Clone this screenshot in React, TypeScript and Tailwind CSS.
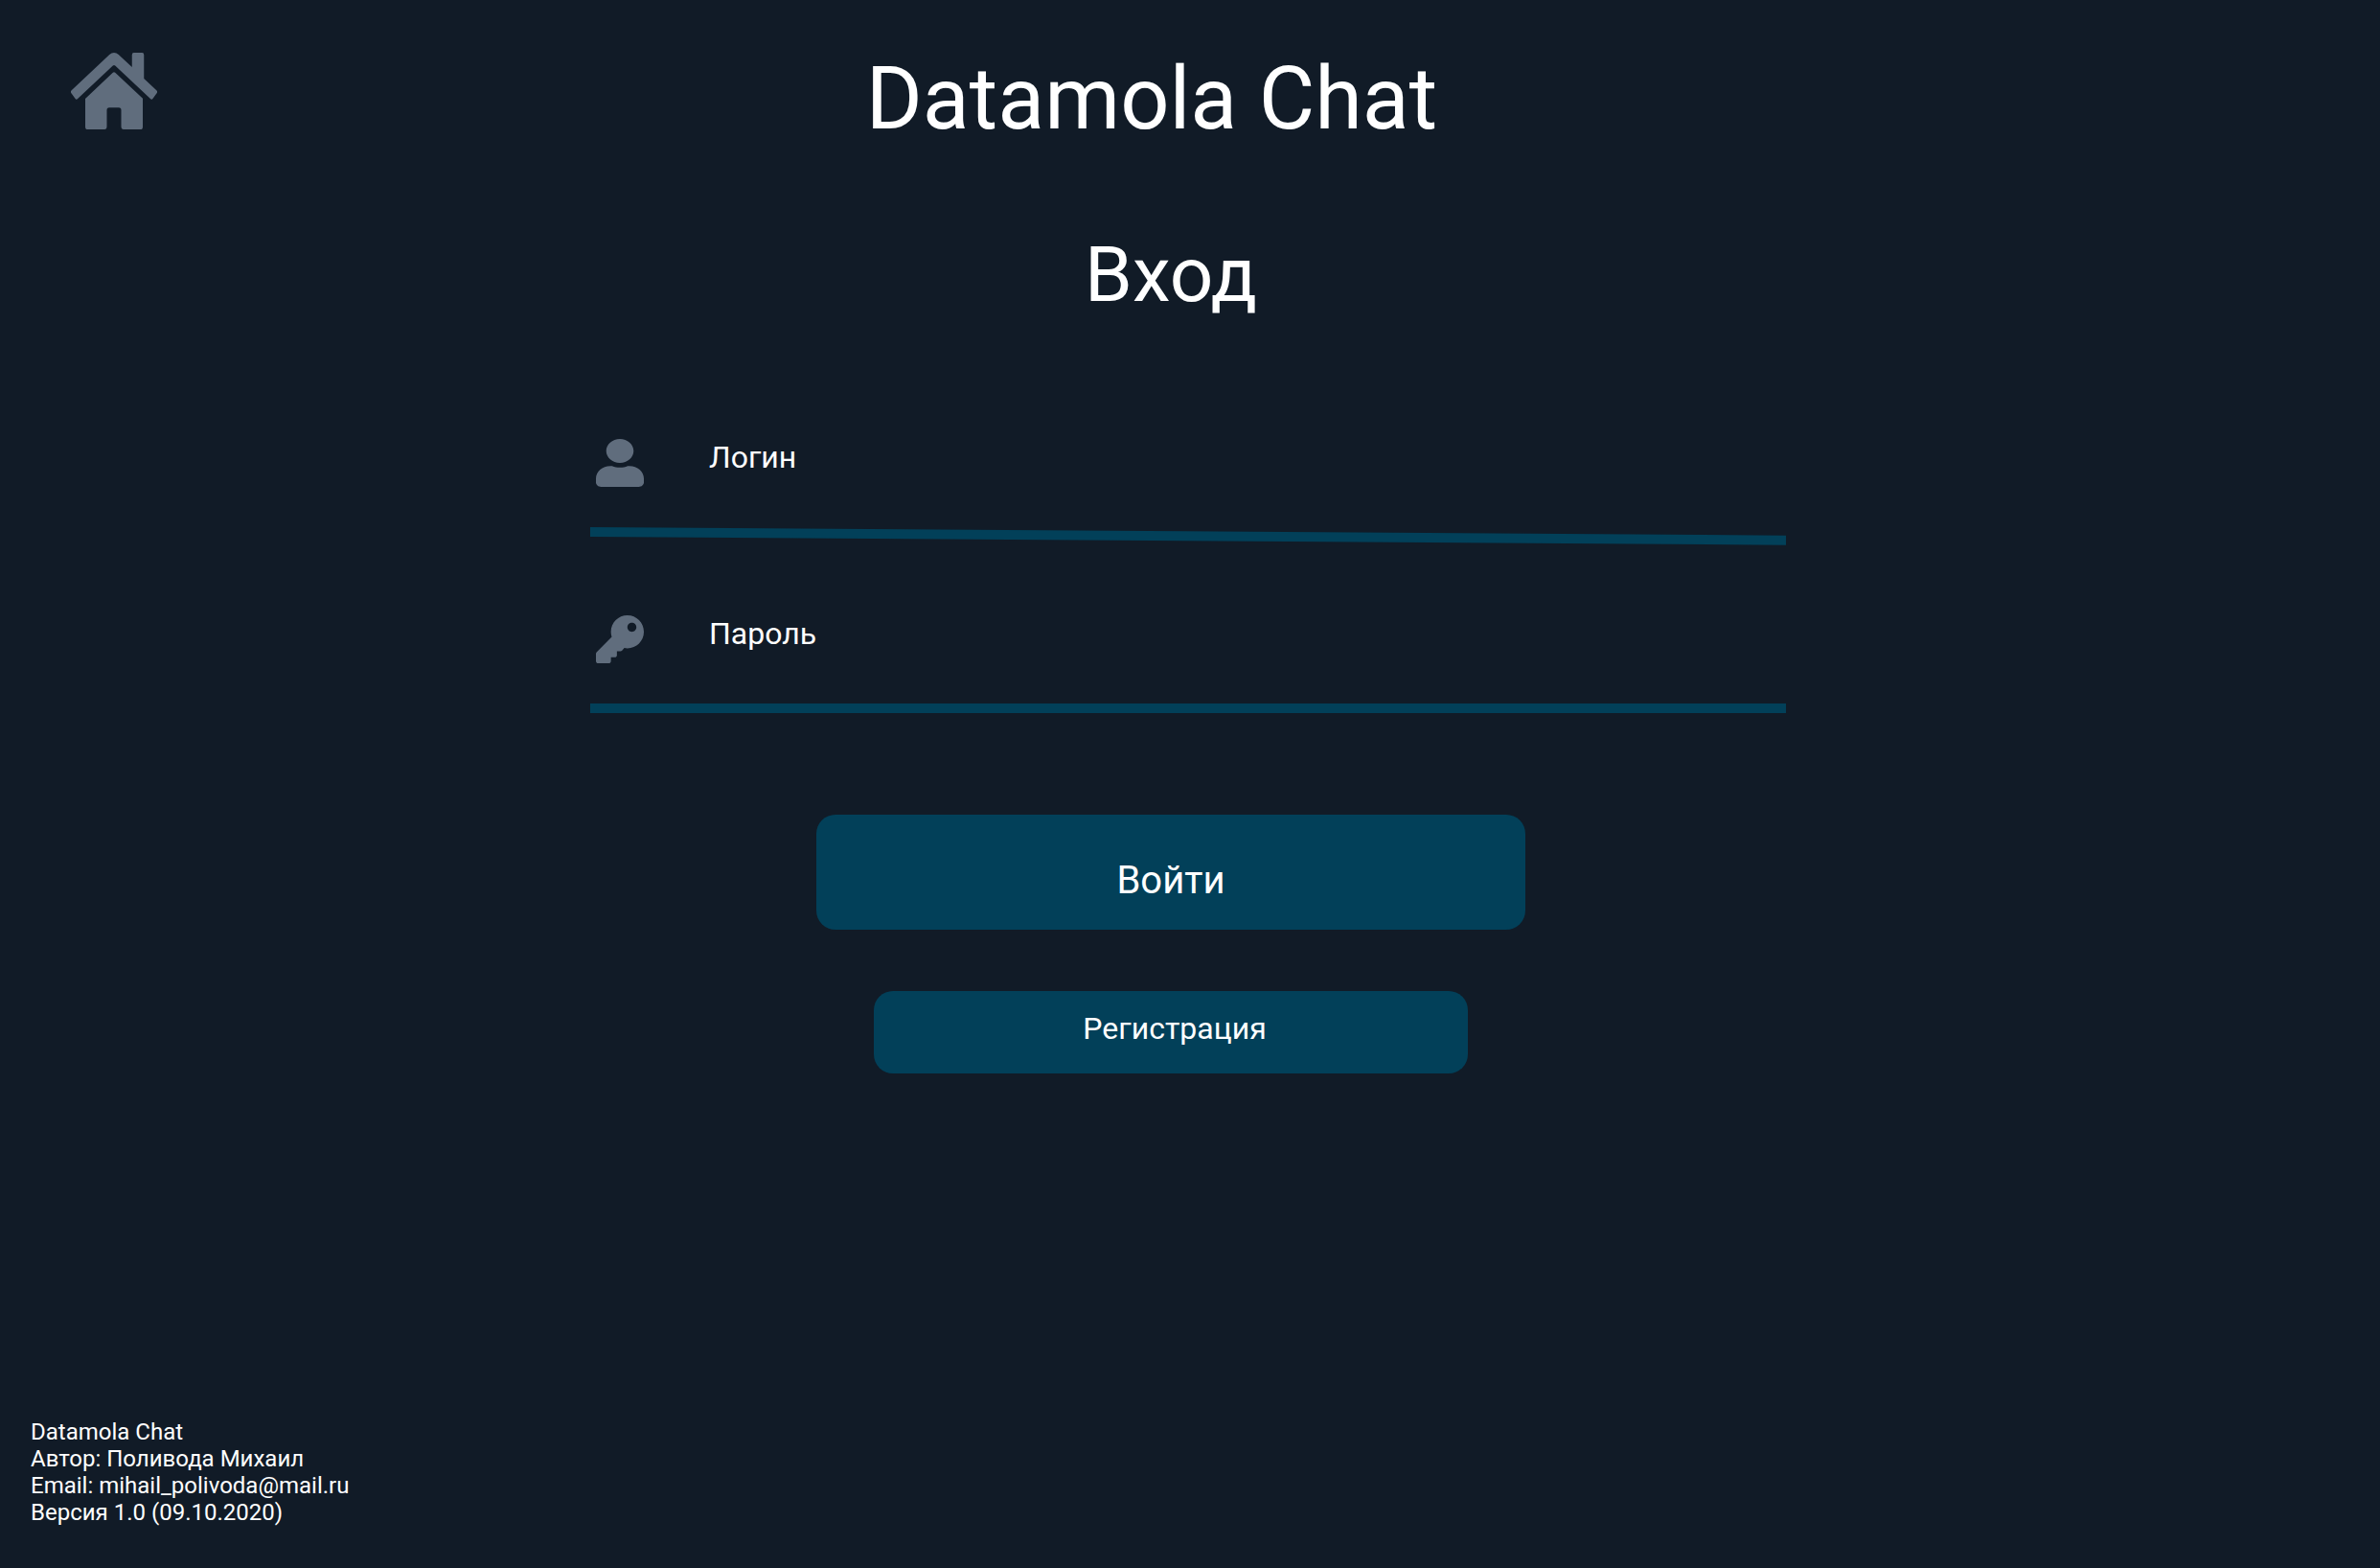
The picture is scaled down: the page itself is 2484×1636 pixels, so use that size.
import type { ReactNode } from "react";

function HomeIcon() {
  return (
    <svg viewBox="0 32 576 448" preserveAspectRatio="none" fill="currentColor" className="block h-20 w-[90px]" aria-hidden="true">
      <path d="M280.37 148.26L96 300.11V464a16 16 0 0 0 16 16l112.06-.29a16 16 0 0 0 15.92-16V368a16 16 0 0 1 16-16h64a16 16 0 0 1 16 16v95.64a16 16 0 0 0 16 16.05L464 480a16 16 0 0 0 16-16V300L295.67 148.26a12.19 12.19 0 0 0-15.3 0zM571.6 251.47L488 182.56V44.05a12 12 0 0 0-12-12h-56a12 12 0 0 0-12 12v72.61L318.47 43a48 48 0 0 0-61 0L4.34 251.47a12 12 0 0 0-1.6 16.9l25.5 31A12 12 0 0 0 45.15 301l235.22-193.74a12.19 12.19 0 0 1 15.3 0L530.9 301a12 12 0 0 0 16.9-1.6l25.5-31a12 12 0 0 0-1.7-16.93z" />
    </svg>
  );
}

function UserIcon() {
  return (
    <svg viewBox="0 0 448 512" preserveAspectRatio="none" fill="currentColor" className="block size-[50px] shrink-0 text-[#606d7d]" aria-hidden="true">
      <path d="M224 256c70.7 0 128-57.3 128-128S294.7 0 224 0 96 57.3 96 128s57.3 128 128 128zm89.6 32h-16.7c-22.2 10.2-46.9 16-72.9 16s-50.6-5.8-72.9-16h-16.7C60.2 288 0 348.2 0 422.4V464c0 26.5 21.5 48 48 48h352c26.5 0 48-21.5 48-48v-41.6c0-74.2-60.2-134.4-134.4-134.4z" />
    </svg>
  );
}

function KeyIcon() {
  return (
    <svg viewBox="0 0 512 512" fill="currentColor" className="block size-[50px] shrink-0 text-[#606d7d]" aria-hidden="true">
      <path d="M512 176.001C512 273.203 433.202 352 336 352c-11.22 0-22.19-1.062-32.827-3.069l-24.012 27.014A23.999 23.999 0 0 1 261.223 384H224v40c0 13.255-10.745 24-24 24h-40v40c0 13.255-10.745 24-24 24H24c-13.255 0-24-10.745-24-24v-78.059c0-6.365 2.529-12.47 7.029-16.971l161.802-161.802C163.108 213.814 160 195.271 160 176 160 78.798 238.797.001 335.999 0 433.488-.001 512 78.511 512 176.001zM336 128c0 26.51 21.49 48 48 48s48-21.49 48-48-21.49-48-48-48-48 21.49-48 48z" />
    </svg>
  );
}

type FieldProps = {
  id: string;
  type: string;
  label: string;
  icon: ReactNode;
  slope: number;
};

function Field({ id, type, label, icon, slope }: FieldProps) {
  return (
    <div className="flex flex-col">
      <div className="flex items-start gap-17 pl-[6px]">
        {icon}
        <div className="flex min-w-0 flex-1 gap-4 text-[32px] leading-[38px]">
          <label htmlFor={id}>{label}</label>
          <input id={id} name={id} type={type} className="h-[38px] min-w-0 flex-1 bg-transparent outline-none" />
        </div>
      </div>
      <svg viewBox="0 0 1248 20" preserveAspectRatio="none" className="mt-[42px] block h-5 w-full text-[#024059]" aria-hidden="true">
        <polygon fill="currentColor" points={`0,0 1248,${slope} 1248,${slope + 10} 0,10`} />
      </svg>
    </div>
  );
}

export default function App() {
  return (
    <div className="flex min-h-screen flex-col bg-[#111b27] font-[Roboto,sans-serif] text-white">
      <header className="grid grid-cols-[1fr_auto_1fr] items-start pt-[51px] pr-[154px] pl-[74px]">
        <a href="#home" aria-label="Datamola Chat" className="mt-1 justify-self-start text-[#606d7d]">
          <HomeIcon />
        </a>
        <h1 className="text-[90px] leading-[106px]">Datamola Chat</h1>
      </header>

      <main className="flex flex-col items-center pt-[83px] pr-10">
        <h2 className="text-[80px] leading-[94px]">Вход</h2>
        <form className="flex w-full flex-col items-center pt-[124px]" onSubmit={(e) => e.preventDefault()}>
          <div className="ml-9 flex w-full max-w-[1248px] flex-col gap-[72px]">
            <Field id="login" type="text" label="Логин" icon={<UserIcon />} slope={8.7} />
            <Field id="password" type="password" label="Пароль" icon={<KeyIcon />} slope={0} />
          </div>
          <button type="submit" className="mt-24 h-[120px] w-full max-w-[740px] rounded-[20px] bg-[#024059] pt-[18px] text-[40px] leading-[48px]">
            Войти
          </button>
          <button type="button" className="mt-16 h-[86px] w-full max-w-[620px] rounded-[20px] bg-[#024059] pb-2 pl-2 text-[32px] leading-[38px]">
            Регистрация
          </button>
        </form>
      </main>

      <footer className="mt-auto pb-11 pl-8 text-[24px] leading-7">
        <p>Datamola Chat</p>
        <p>Автор: Поливода Михаил</p>
        <p>
          Email: <a href="mailto:mihail_polivoda@mail.ru">mihail_polivoda@mail.ru</a>
        </p>
        <p>Версия 1.0 (09.10.2020)</p>
      </footer>
    </div>
  );
}
